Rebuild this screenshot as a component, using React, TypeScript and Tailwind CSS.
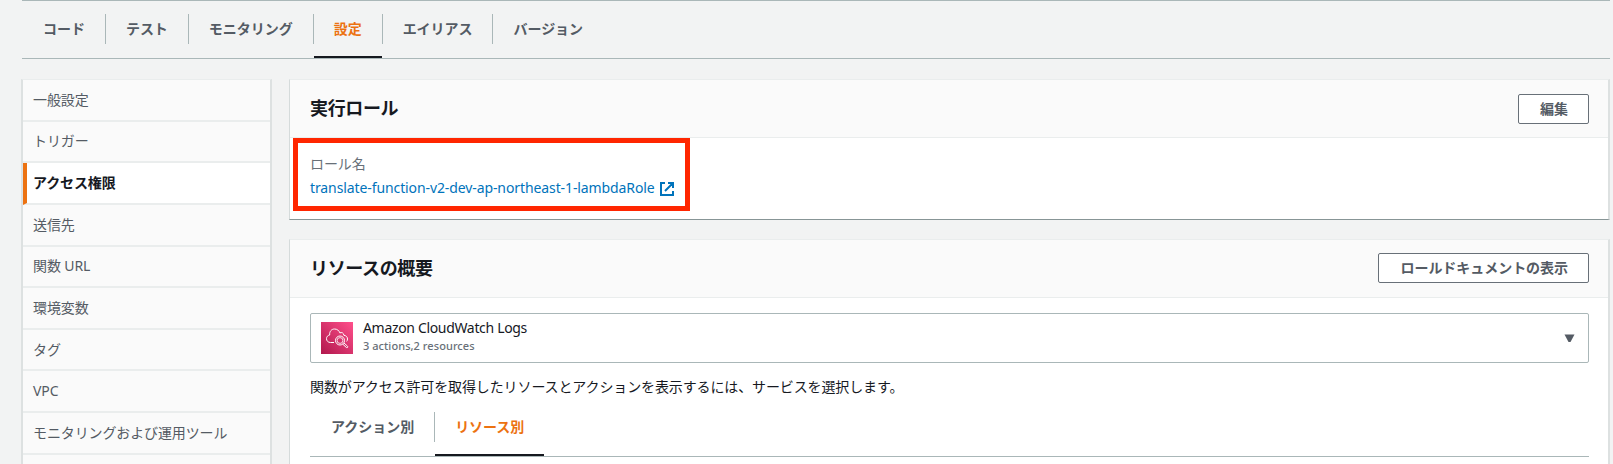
import React from "react";

const tabs = ["コード", "テスト", "モニタリング", "設定", "エイリアス", "バージョン"];
const nav = ["一般設定", "トリガー", "アクセス権限", "送信先", "関数 URL", "環境変数", "タグ", "VPC", "モニタリングおよび運用ツール", ""];

function Tab({ label, active, last }: { label: string; active?: boolean; last?: boolean }) {
  return (
    <div className="flex h-full">
      <div
        className={
          "flex flex-col justify-between px-5 text-[14px] leading-[30px] font-bold tracking-[-0.03px] whitespace-nowrap " +
          (active ? "text-[#ec7211]" : "text-[#545b64]")
        }
      >
        <span>{label}</span>
        <span className={active ? "-mx-5 h-[2px] bg-[#16191f]" : "h-[2px]"} />
      </div>
      {!last && <div className="h-[30px] w-px bg-[#aab7b8]" />}
    </div>
  );
}

function Button({ children }: { children: React.ReactNode }) {
  return (
    <button className="h-[30px] rounded-[2px] border border-[#687078] bg-white pr-[20px] pl-[21px] text-[14px] leading-[28px] font-bold tracking-[-0.04px] text-[#545b64]">
      {children}
    </button>
  );
}

export default function App() {
  return (
    <div
      lang="ja"
      className="h-[464px] w-full overflow-hidden bg-[#f2f3f3] pr-[3px] pl-[21px] font-['Noto_Sans','Noto_Sans_CJK_JP',sans-serif] text-[14px] tracking-[-0.12px] text-[#16191f]"
    >
      <div className="ml-px flex h-[59px] border-t border-b border-t-[#aab7b8] border-b-[#aab7b8] pt-[13px] pl-px">
        {tabs.map((t, i) => (
          <Tab key={t} label={t} active={i === 3} last={i === 5} />
        ))}
      </div>

      <div className="flex gap-[17px] pt-5">
        <nav className="w-[251px] shrink-0 border-x-2 border-t border-x-[#dde1e1] border-t-[#eaeded] bg-[#fafafa]">
          {nav.map((n, i) => (
            <div
              key={i}
              className={
                "flex h-[41.63px] items-center border-b-2 border-b-[#eaeded] pb-px text-[14px] " +
                (i === 2
                  ? "border-l-4 border-l-[#ec7211] bg-white pl-[6px] font-bold text-[#16191f]"
                  : "pl-[10px] text-[#545b64]")
              }
            >
              {n}
            </div>
          ))}
        </nav>

        <main className="flex min-w-0 flex-1 flex-col gap-[19px]">
          <section className="h-[141px] border border-t-[#eaeded] border-r-2 border-b-[#879596] border-l-[#d5dbdb] border-r-[#dde1e1] bg-white">
            <header className="flex h-[58px] items-center justify-between border-b border-[#eaeded] bg-[#fafafa] pr-[19px] pl-[20px]">
              <h2 className="text-[18px] font-bold tracking-[-0.35px]">実行ロール</h2>
              <Button>編集</Button>
            </header>
            <div className="relative flex flex-col pt-[15px] pl-[20px]">
              <span className="leading-[22px] text-[#687078]">ロール名</span>
              <a className="mt-[2px] flex items-center leading-[22px] text-[#0073bb]">
                <span className="tracking-[-0.1px]">translate-function-v2-dev-ap-northeast-1-lambdaRole</span>
                <svg className="mt-px ml-[5px]" width="14" height="14" viewBox="0 0 14 14" fill="none" stroke="currentColor" strokeWidth="2">
                  <path d="M5 1H1v12h12V9M8 1h5v5M13 1L5 9" />
                </svg>
              </a>
              <div className="absolute top-0 left-[3px] h-[73px] w-[397px] border-[5px] border-[#ff2600]" />
            </div>
          </section>

          <section className="h-[260px] border border-t-[#eaeded] border-r-2 border-l-[#d5dbdb] border-r-[#dde1e1] bg-white">
            <header className="flex h-[58px] items-center justify-between border-b border-[#eaeded] bg-[#fafafa] pr-[19px] pb-px pl-[20px]">
              <h2 className="text-[18px] font-bold tracking-[-0.35px]">リソースの概要</h2>
              <Button>ロールドキュメントの表示</Button>
            </header>
            <div className="pt-[15px] pr-[19px] pl-[20px]">
              <div className="flex h-[50px] items-center rounded-[2px] border border-[#aab7b8] pr-[13px] pl-[10px]">
                <svg width="32" height="32" viewBox="0 0 32 32" fill="none">
                  <defs>
                    <linearGradient id="cw" x1="0" y1="1" x2="1" y2="0">
                      <stop offset="0" stopColor="#b0184d" />
                      <stop offset="1" stopColor="#ff4f8b" />
                    </linearGradient>
                  </defs>
                  <rect width="32" height="32" fill="url(#cw)" />
                  <g stroke="#fff" strokeWidth="1">
                    <path d="M13 20.500H9.500C7 20.500 5.500 18.800 5.500 16.700c0-2 1.300-3.300 3.200-3.700C8.300 9.500 10.500 7 13.500 7c2.700 0 4.500 1.500 5.400 3.900 1.700-1 3.800 0 4 2.400 2.200.3 3.600 1.600 3.600 3.700 0 1-.3 1.800-.9 2.400" />
                    <circle cx="19" cy="18.500" r="4.500" />
                    <circle cx="19" cy="18.500" r="2.900" strokeOpacity=".8" />
                    <path d="M21.800 22.200l3.600 3.300c1 .6 1.900-.5 1.100-1.300l-3.600-3.300" />
                  </g>
                </svg>
                <div className="ml-[10px] flex flex-1 flex-col pb-[3px]">
                  <span className="leading-[18px] tracking-[-0.33px]">Amazon CloudWatch Logs</span>
                  <span className="text-[11px] leading-[17px] font-medium tracking-[0.06px] text-[#687078]">3 actions,2 resources</span>
                </div>
                <svg width="11" height="9" viewBox="0 0 11 9" fill="#545b64">
                  <path d="M.5.500h10L6.500 8h-2z" />
                </svg>
              </div>
              <p className="mt-[13px] leading-[22px]">関数がアクセス許可を取得したリソースとアクションを表示するには、サービスを選択します。</p>
              <div className="mt-[14px] flex h-[45px] border-b border-[#aab7b8] pl-px">
                <Tab label="アクション別" />
                <Tab label="リソース別" active last />
              </div>
            </div>
          </section>
        </main>
      </div>
    </div>
  );
}
